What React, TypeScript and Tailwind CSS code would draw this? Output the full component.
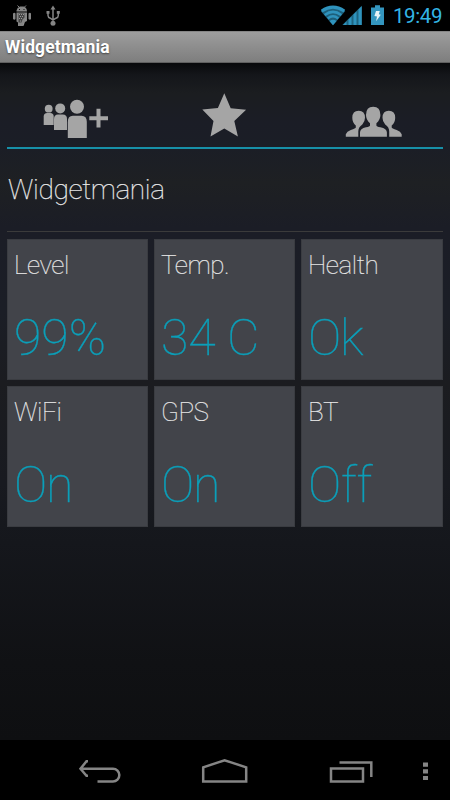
import React from 'react';

const tiles = [
  { label: 'Level', value: '99%', spacing: 'tracking-[0px]' },
  { label: 'Temp.', value: '34 C', spacing: 'tracking-[-0.200px]' },
  { label: 'Health', value: 'Ok', spacing: 'tracking-[-1.200px]' },
  { label: 'WiFi', value: 'On', spacing: 'tracking-[-1.200px]' },
  { label: 'GPS', value: 'On', spacing: 'tracking-[-1.200px]' },
  { label: 'BT', value: 'Off', spacing: 'tracking-[-0.300px]' },
];

function DebugIcon() {
  return (
    <svg className="h-[22px] w-5" viewBox="0 0 20 22" fill="#858585">
      <path d="M5.500 .5l2 2M14 .5l-2 2" stroke="#858585" strokeWidth="1" />
      <path d="M4.500 6.500V5.500Q5 2.500 8 1.500h3.500Q15 2.500 15 6.500z" />
      <path d="M1 8.500q1.500-1.500 2.500 0v5.500q-1 1.500-2.500 0zM16.500 8.500q1.500-1.500 2.500 0v5.500q-1 1.500-2.500 0z" />
      <path d="M4.500 7.500H15v8.500l-2 1-1.500 4H6v-3.500l-1.500-1z" />
      <path d="M6.500 8.500h6v4l-2 2-1 3h-3z" fill="#444" />
      <path d="M7 9.500h1M9 9.500h1M11 9.500h1M8 11.500h1M10 11.500h1M7 13.500h1M9 13.500h1M8 16h1M11 19h1M13 15h1" stroke="#999" strokeWidth="1" />
      <path d="M7 4.500h1M11.500 4.500h1" stroke="#111" strokeWidth="1" />
    </svg>
  );
}

function UsbIcon() {
  return (
    <svg className="ml-[13px] h-[22px] w-4" viewBox="0 0 16 22" fill="none" stroke="#858585" strokeWidth="1.500">
      <path d="M8 3v15M3 8v2.500q0 2 2.300 2.700L8 15l3-1.800q2.300-.8 2.300-2.700V8" />
      <path d="M8 .5l2.500 4h-5zM1.500 6h3v2.700h-3zM11.800 6h3v2.700h-3z" fill="#858585" stroke="none" />
      <circle cx="8" cy="18.300" r="2.500" fill="#858585" stroke="none" />
    </svg>
  );
}

function StatusBar() {
  return (
    <header className="flex h-[31px] shrink-0 items-start bg-black">
      <div className="flex pt-[5px] pl-3">
        <DebugIcon />
        <UsbIcon />
      </div>
      <svg className="mt-[5px] ml-auto h-[21px] w-[66px]" viewBox="320 5 66 21">
        <path d="M320.700 11Q333 1.500 345.300 11L333 25.300z" fill="#1d5f7a" />
        <g fill="none" stroke="#2f93bd">
          <path d="M321.700 11Q333 3.200 344.300 11" strokeWidth="3" />
          <path d="M324.700 14.900Q333 8.800 341.300 14.900" strokeWidth="2.500" />
          <path d="M327.700 18.500Q333 14.200 338.300 18.500" strokeWidth="2.400" />
        </g>
        <path d="M329.500 21Q333 18.300 336.500 21L333 25.200z" fill="#2f93bd" />
        <path d="M342.300 25L361.700 5.700V25z" fill="#1e6480" />
        <path d="M343 25l3.500-3.500V25zM348.500 25v-5.500l3-3V25zM353.500 25V14.500l3-3V25zM358.500 25V9.500l3.200-3.200V25z" fill="#2f93bd" />
        <path d="M371 7.500h4V5.300h5v2.200h4V25h-13z" fill="#3496bf" />
        <path d="M376 11h3.800l-1 3.200 2 .6-4.700 6.500.9-4.900-2.600-.5z" fill="#e8f4f8" />
      </svg>
      <span className="mt-[3px] mr-2 ml-[7px] w-[49px] text-[20.500px] leading-[26px] tracking-[-0.400px] text-[#33b5e5]">19:49</span>
    </header>
  );
}

function Toolbar() {
  return (
    <div className="mx-[7px] flex h-[86px] shrink-0 items-end border-b-2 border-[#1790a8]">
      <div className="flex flex-1 justify-center">
        <svg className="mr-[8px] mb-2 h-[42px] w-[68px]" viewBox="42 97 68 42" fill="#a5a5a5">
          <circle cx="48.700" cy="108.700" r="3.900" />
          <path d="M43.700 125v-8.500q0-3.500 3.500-3.500h3q3.500 0 3.500 3.500v8.500z" />
          <circle cx="60.200" cy="108.400" r="5" />
          <path d="M54 130v-11q0-4.500 4-4.500h4.800q4.200 0 4.200 4.500v11z" />
          <circle cx="77" cy="106.800" r="7" />
          <path d="M67.800 138v-16q0-6.300 5-6.300h8.700q5.300 0 5.300 6.300V138z" />
          <path d="M89.300 116.200h7.200v-7.500h4v7.500h7.500v4h-7.500v7.300h-4v-7.300h-7.200z" />
        </svg>
      </div>
      <div className="flex flex-1 justify-center">
        <svg className="mr-[2px] mb-2 h-[48px] w-[48px]" viewBox="200 91 48 48" fill="#a5a5a5">
          <path d="M224.300 93.200l6.400 15.100 15.400 1.500-11.800 11.200 3.600 15.500-13.600-8-13.800 8 3-15.500-11.200-11.500 15.600-1.500z" />
        </svg>
      </div>
      <div className="flex flex-1 justify-center">
        <svg className="mb-2 ml-[8px] h-[34px] w-[58px]" viewBox="345 105 58 34" fill="#a5a5a5">
          <path d="M345.800 136.800v-2.500q1-2.800 5-4.200 5-1.600 5-2.500v-2.200q-3.500-2.800-3.500-7.700 0-7 6.400-7 6.300 0 6.300 7 0 4-2.700 6.800-4 2.500-4 7v5.300z" />
          <path d="M401.700 136.800v-2.500q-1-2.800-5-4.200-5-1.600-5-2.500v-2.200q3.500-2.800 3.500-7.700 0-7-6.400-7-6.300 0-6.300 7 0 4 2.700 6.800 4 2.500 4 7v5.300z" />
          <path d="M360 136.800v-4.300q0-4 6-5.200 4-.6 4-1.800v-2.200q-4-3.500-4-8.300 0-8.200 7.200-8.200t7.200 8.200q0 4.800-4 8.300v2.200q0 1.200 4 1.800 6.500 1.200 6.500 5.200v4.300z" stroke="#1b1d25" strokeWidth="1.500" paintOrder="stroke" />
        </svg>
      </div>
    </div>
  );
}

function NavigationBar() {
  return (
    <nav className="h-[60px] shrink-0 bg-black">
      <svg className="h-[60px] w-full" viewBox="0.500 740 450 60" fill="none" stroke="#858585" strokeWidth="2.500">
        <path d="M81 768.700h32.500a6.200 6.200 0 0 1 0 12.700H98M88.500 761.300H87l-6 7.400 6 7h1.500" />
        <path d="M203.700 781.400v-14l21.400-7.200 21.600 7.200v14z" />
        <path d="M331.500 768.400h32v13h-32zM340 762.400h31.800V777" />
        <path d="M423.500 764.600h5M423.500 771.400h5M423.500 778h5" strokeWidth="4.200" />
      </svg>
    </nav>
  );
}

export default function App() {
  return (
    <div className="flex h-[800px] w-[450px] flex-col overflow-hidden bg-black font-['Roboto',sans-serif]">
      <StatusBar />
      <div className="flex h-8 shrink-0 items-center border-t border-b border-t-[#858585] border-b-[#606060] bg-linear-to-b from-[#9d9d9d] to-[#7e7e7e] pl-[5px]">
        <h1 className="text-[17.500px] font-bold tracking-[0.100px] text-white [text-shadow:0_1px_2px_rgba(0,0,0,0.500)]">Widgetmania</h1>
      </div>
      <main className="flex min-h-0 flex-1 flex-col bg-[linear-gradient(180deg,#08090b_0px,#14161a_12px,#1b1d20_30px,#1b1d26_60px,#1b1e26_86px,#1e2023_120px,#1b1d26_165px,#1b1e26_250px,#1b1c20_320px,#181a20_420px,#15171c_480px,#101114_600px,#0e0f11_677px)]">
        <Toolbar />
        <h2 className="mx-[7px] h-[83px] shrink-0 border-b border-[#3b3b3b] pt-6 pl-px text-[28px] leading-[34px] font-thin tracking-[-0.350px] text-[#e8e8e8] [-webkit-text-stroke:0.250px_#e8e8e8]">Widgetmania</h2>
        <section className="mt-[7px] grid grid-cols-[141px_141px_142px] grid-rows-[141px_141px] gap-x-[6px] gap-y-[6px] pl-[7px]">
          {tiles.map((tile) => (
            <div key={tile.label} className="border border-[#3a3c41] bg-[#42444a] pt-[9px] pl-[6px]">
              <div className="h-8 text-[26px] leading-8 font-thin tracking-[-0.450px] text-[#e8e8e8] [-webkit-text-stroke:0.200px_#e8e8e8]">{tile.label}</div>
              <div className={`mt-6 text-[50px] leading-[66px] font-thin whitespace-nowrap text-[#0b9fb9] [-webkit-text-stroke:0.350px_#0b9fb9] ${tile.spacing}`}>{tile.value}</div>
            </div>
          ))}
        </section>
      </main>
      <NavigationBar />
    </div>
  );
}
